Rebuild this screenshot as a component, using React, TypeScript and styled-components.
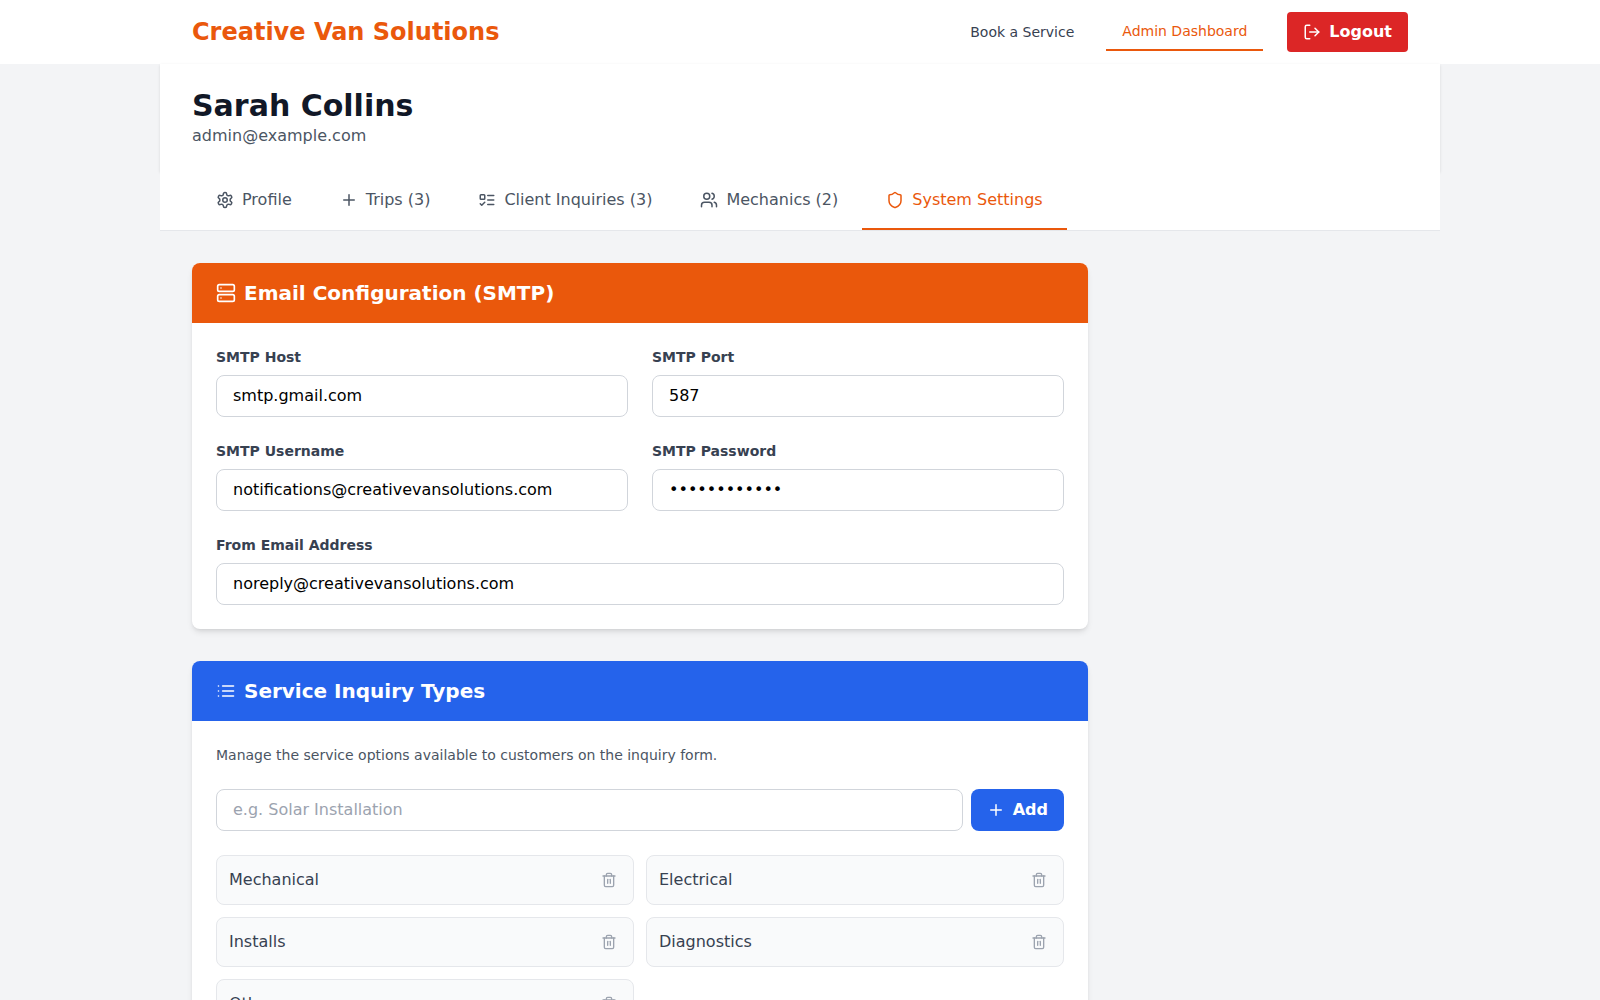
import React, { useState } from "react";
import styled, { createGlobalStyle, css } from "styled-components";
import { LogOut, Plus, Server, Shield, Users } from "lucide-react";

const GlobalStyle = createGlobalStyle`
  *, *::before, *::after { box-sizing: border-box; }
  html, body { margin: 0; height: 100%; overflow: hidden; }
  body {
    background: #f3f4f6;
    font-family: "DejaVu Sans", sans-serif;
    font-size: 16px;
    line-height: 24px;
  }
  h1, h2, p { margin: 0; }
  button, input { font: inherit; }
  svg { display: block; flex-shrink: 0; }
`;

const Page = styled.div`
  height: 100vh;
  overflow: hidden;
  background: #f3f4f6;
`;

const TopBar = styled.header`
  background: #ffffff;
`;

const TopBarInner = styled.div`
  display: flex;
  align-items: center;
  justify-content: space-between;
  max-width: 1280px;
  height: 64px;
  margin: 0 auto;
  padding: 0 32px;
`;

const Brand = styled.span`
  color: #ea580c;
  font-size: 24px;
  line-height: 32px;
  font-weight: 700;
`;

const TopNav = styled.nav`
  display: flex;
  align-items: center;
  gap: 16px;
`;

const TopLink = styled.a<{ $active?: boolean }>`
  padding: 8px 16px;
  color: #374151;
  font-size: 14px;
  line-height: 20px;
  font-weight: 500;
  text-decoration: none;
  ${(p) =>
    p.$active &&
    css`
      color: #ea580c;
      border-bottom: 2px solid #ea580c;
    `}
`;

const LogoutButton = styled.button`
  display: flex;
  align-items: center;
  gap: 8px;
  margin-left: 8px;
  padding: 8px 16px;
  border: 0;
  border-radius: 4px;
  background: #dc2626;
  color: #ffffff;
  font-weight: 700;
`;

const Container = styled.div`
  max-width: 1280px;
  margin: 0 auto;
`;

const ProfileHeader = styled.section`
  padding: 24px 32px;
  background: #ffffff;
  box-shadow: 0 1px 3px 0 rgba(0, 0, 0, 0.1), 0 1px 2px -1px rgba(0, 0, 0, 0.1);
`;

const ProfileName = styled.h1`
  color: #111827;
  font-size: 30px;
  line-height: 36px;
  font-weight: 700;
`;

const ProfileEmail = styled.p`
  color: #4b5563;
`;

const Tabs = styled.nav`
  position: relative;
  display: flex;
  padding: 0 32px;
  background: #ffffff;
  border-bottom: 1px solid #e5e7eb;
`;

const Tab = styled.button<{ $active: boolean }>`
  display: flex;
  align-items: center;
  gap: 8px;
  padding: 16px 24px;
  border: 0;
  border-bottom: 2px solid ${(p) => (p.$active ? "#ea580c" : "transparent")};
  background: transparent;
  color: ${(p) => (p.$active ? "#ea580c" : "#4b5563")};
  font-weight: 500;
`;

const Main = styled.main`
  display: flex;
  flex-direction: column;
  gap: 32px;
  max-width: 960px;
  padding: 32px;
`;

const Card = styled.section`
  overflow: hidden;
  border-radius: 8px;
  background: #ffffff;
  box-shadow: 0 4px 6px -1px rgba(0, 0, 0, 0.1), 0 2px 4px -2px rgba(0, 0, 0, 0.1);
`;

const CardHeader = styled.div<{ $color: string }>`
  display: flex;
  align-items: center;
  gap: 8px;
  padding: 16px 24px;
  background: ${(p) => p.$color};
  color: #ffffff;
`;

const CardTitle = styled.h2`
  font-size: 20px;
  line-height: 28px;
  font-weight: 700;
`;

const CardBody = styled.div`
  padding: 24px;
`;

const FieldGrid = styled.div`
  display: grid;
  grid-template-columns: repeat(2, minmax(0, 1fr));
  gap: 24px;
`;

const Field = styled.label<{ $wide?: boolean }>`
  display: flex;
  flex-direction: column;
  gap: 8px;
  grid-column: ${(p) => (p.$wide ? "span 2" : "auto")};
`;

const FieldLabel = styled.span`
  color: #374151;
  font-size: 14px;
  line-height: 20px;
  font-weight: 700;
`;

const TextInput = styled.input`
  width: 100%;
  height: 42px;
  padding: 7px 16px 9px;
  border: 1px solid #d1d5db;
  border-radius: 8px;
  background: #ffffff;
  color: #000000;
  outline: none;
  &::placeholder {
    color: #9ca3af;
    opacity: 1;
  }
`;

const Hint = styled.p`
  margin-bottom: 24px;
  color: #4b5563;
  font-size: 14px;
  line-height: 20px;
`;

const AddRow = styled.div`
  display: flex;
  gap: 8px;
  margin-bottom: 24px;
`;

const AddButton = styled.button`
  display: flex;
  align-items: center;
  gap: 8px;
  padding: 8px 16px;
  border: 0;
  border-radius: 8px;
  background: #2563eb;
  color: #ffffff;
  font-weight: 700;
`;

const TypeGrid = styled.div`
  display: grid;
  grid-template-columns: repeat(2, minmax(0, 1fr));
  gap: 12px;
`;

const TypeItem = styled.div`
  display: flex;
  align-items: center;
  justify-content: space-between;
  padding: 12px;
  border: 1px solid #e5e7eb;
  border-radius: 8px;
  background: #f9fafb;
  color: #374151;
  font-weight: 500;
`;

const DeleteButton = styled.button`
  padding: 4px;
  border: 0;
  background: transparent;
  color: #9ca3af;
`;

type IconProps = { size: number };

const StrokeIcon = styled.svg.attrs<{ $size: number }>((p) => ({
  viewBox: "0 0 24 24",
  width: p.$size,
  height: p.$size,
}))<{ $size: number }>`
  fill: none;
  stroke: currentColor;
  stroke-width: 2;
  stroke-linecap: round;
  stroke-linejoin: round;
`;

const GearIcon = ({ size }: IconProps) => (
  <StrokeIcon $size={size}>
    <path d="M12.22 2h-.44a2 2 0 0 0-2 2v.18a2 2 0 0 1-1 1.73l-.43.25a2 2 0 0 1-2 0l-.15-.08a2 2 0 0 0-2.73.73l-.22.38a2 2 0 0 0 .73 2.73l.15.1a2 2 0 0 1 1 1.72v.51a2 2 0 0 1-1 1.74l-.15.09a2 2 0 0 0-.73 2.73l.22.38a2 2 0 0 0 2.73.73l.15-.08a2 2 0 0 1 2 0l.43.25a2 2 0 0 1 1 1.73V20a2 2 0 0 0 2 2h.44a2 2 0 0 0 2-2v-.18a2 2 0 0 1 1-1.73l.43-.25a2 2 0 0 1 2 0l.15.08a2 2 0 0 0 2.73-.73l.22-.39a2 2 0 0 0-.73-2.73l-.15-.08a2 2 0 0 1-1-1.74v-.5a2 2 0 0 1 1-1.74l.15-.09a2 2 0 0 0 .73-2.73l-.22-.38a2 2 0 0 0-2.73-.73l-.15.08a2 2 0 0 1-2 0l-.43-.25a2 2 0 0 1-1-1.73V4a2 2 0 0 0-2-2z" />
    <circle cx="12" cy="12" r="3" />
  </StrokeIcon>
);

const TodoIcon = ({ size }: IconProps) => (
  <StrokeIcon $size={size}>
    <rect x="3" y="5" width="6" height="6" rx="1" />
    <path d="m3 17 2 2 4-4" />
    <path d="M13 6h8" />
    <path d="M13 12h8" />
    <path d="M13 18h8" />
  </StrokeIcon>
);

const ListIcon = ({ size }: IconProps) => (
  <StrokeIcon $size={size}>
    <path d="M8 6h13" />
    <path d="M8 12h13" />
    <path d="M8 18h13" />
    <path d="M3 6h.01" />
    <path d="M3 12h.01" />
    <path d="M3 18h.01" />
  </StrokeIcon>
);

const TrashIcon = ({ size }: IconProps) => (
  <StrokeIcon $size={size}>
    <path d="M3 6h18" />
    <path d="M19 6v14c0 1-1 2-2 2H7c-1 0-2-1-2-2V6" />
    <path d="M8 6V4c0-1 1-2 2-2h4c1 0 2 1 2 2v2" />
    <path d="M10 11v6" />
    <path d="M14 11v6" />
  </StrokeIcon>
);

const tabs = [
  { label: "Profile", Icon: GearIcon },
  { label: "Trips (3)", Icon: Plus },
  { label: "Client Inquiries (3)", Icon: TodoIcon },
  { label: "Mechanics (2)", Icon: Users },
  { label: "System Settings", Icon: Shield },
];

const smtpFields = [
  { label: "SMTP Host", value: "smtp.gmail.com" },
  { label: "SMTP Port", value: "587" },
  { label: "SMTP Username", value: "notifications@creativevansolutions.com" },
  { label: "SMTP Password", value: "smtppassword", type: "password" },
  { label: "From Email Address", value: "noreply@creativevansolutions.com", wide: true },
];

export default function App() {
  const [activeTab, setActiveTab] = useState("System Settings");
  const [types, setTypes] = useState(["Mechanical", "Electrical", "Installs", "Diagnostics", "Other"]);
  const [draft, setDraft] = useState("");

  const addType = () => {
    if (!draft.trim()) return;
    setTypes([...types, draft.trim()]);
    setDraft("");
  };

  return (
    <Page>
      <GlobalStyle />
      <TopBar>
        <TopBarInner>
          <Brand>Creative Van Solutions</Brand>
          <TopNav>
            <TopLink>Book a Service</TopLink>
            <TopLink $active>Admin Dashboard</TopLink>
            <LogoutButton>
              <LogOut size={18} />
              Logout
            </LogoutButton>
          </TopNav>
        </TopBarInner>
      </TopBar>
      <Container>
        <ProfileHeader>
          <ProfileName>Sarah Collins</ProfileName>
          <ProfileEmail>admin@example.com</ProfileEmail>
        </ProfileHeader>
        <Tabs>
          {tabs.map(({ label, Icon }) => (
            <Tab key={label} $active={label === activeTab} onClick={() => setActiveTab(label)}>
              <Icon size={18} />
              {label}
            </Tab>
          ))}
        </Tabs>
        <Main>
          <Card>
            <CardHeader $color="#ea580c">
              <Server size={20} />
              <CardTitle>Email Configuration (SMTP)</CardTitle>
            </CardHeader>
            <CardBody>
              <FieldGrid>
                {smtpFields.map((f) => (
                  <Field key={f.label} $wide={f.wide}>
                    <FieldLabel>{f.label}</FieldLabel>
                    <TextInput type={f.type ?? "text"} defaultValue={f.value} />
                  </Field>
                ))}
              </FieldGrid>
            </CardBody>
          </Card>
          <Card>
            <CardHeader $color="#2563eb">
              <ListIcon size={20} />
              <CardTitle>Service Inquiry Types</CardTitle>
            </CardHeader>
            <CardBody>
              <Hint>Manage the service options available to customers on the inquiry form.</Hint>
              <AddRow>
                <TextInput
                  placeholder="e.g. Solar Installation"
                  value={draft}
                  onChange={(e) => setDraft(e.target.value)}
                />
                <AddButton onClick={addType}>
                  <Plus size={18} />
                  Add
                </AddButton>
              </AddRow>
              <TypeGrid>
                {types.map((name) => (
                  <TypeItem key={name}>
                    {name}
                    <DeleteButton onClick={() => setTypes(types.filter((t) => t !== name))}>
                      <TrashIcon size={16} />
                    </DeleteButton>
                  </TypeItem>
                ))}
              </TypeGrid>
            </CardBody>
          </Card>
        </Main>
      </Container>
    </Page>
  );
}
